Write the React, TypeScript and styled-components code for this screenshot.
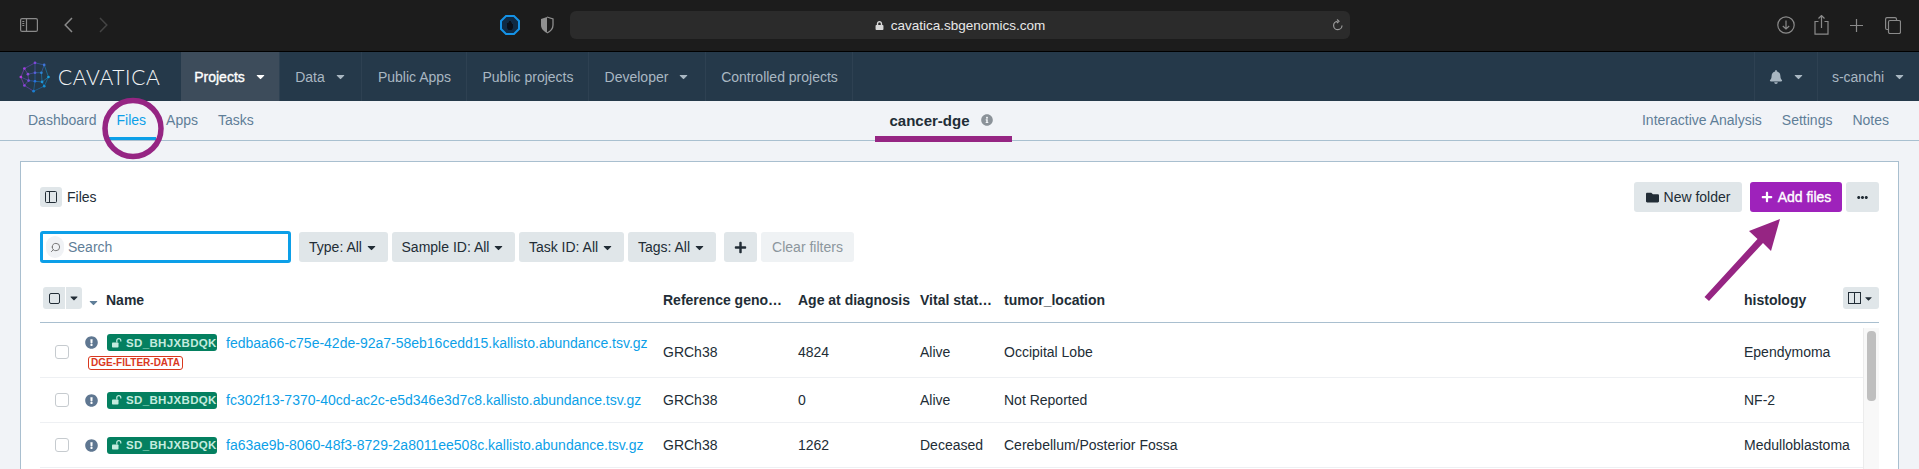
import React from 'react';
import styled, { createGlobalStyle } from 'styled-components';
import {
  FaBell,
  FaCaretDown,
  FaEllipsisH,
  FaExclamationCircle,
  FaFolder,
  FaInfoCircle,
  FaLock,
  FaPlus,
} from 'react-icons/fa';
import { Search as SearchGlyph } from 'lucide-react';

const GlobalStyle = createGlobalStyle`
  html, body {
    margin: 0;
    padding: 0;
    height: 469px;
    overflow: hidden;
    background: #f1f3f7;
    font-family: "Liberation Sans", Arial, sans-serif;
    font-size: 14px;
    color: #222d36;
  }
  * { box-sizing: border-box; }
`;

const Page = styled.div`
  position: relative;
  width: 1919px;
  height: 469px;
  overflow: hidden;
`;

/* browser chrome */
const BrowserBar = styled.header`
  height: 52px;
  background: #1c1c1c;
  border-bottom: 1px solid #000;
  display: flex;
  align-items: center;
  padding: 0 18px 1px 20px;
`;

const ChromeGroup = styled.div`
  display: flex;
  align-items: center;
`;

const ChromeIcon = styled.svg<{ $gap?: number }>`
  display: block;
  margin-left: ${(p) => p.$gap ?? 0}px;
  fill: none;
  stroke: #8a8a8a;
  stroke-width: 1.2;
`;

const AddressBar = styled.div`
  position: relative;
  width: 780px;
  height: 28px;
  margin-left: 16px;
  background: #2b2b2b;
  border-radius: 6px;
  display: flex;
  align-items: center;
  justify-content: center;
  color: #e8e8e8;
  font-size: 13.5px;
  gap: 7px;
  svg { color: #d8d8d8; }
`;

const Reload = styled.svg`
  position: absolute;
  right: 6px;
  top: 8px;
  fill: none;
  stroke: #9a9a9a;
  stroke-width: 1.2;
`;

/* app navigation */
const TopNav = styled.nav`
  height: 49px;
  background: #25394a;
  display: flex;
  align-items: stretch;
`;

const Brand = styled.div`
  width: 181px;
  padding-left: 18px;
  display: flex;
  align-items: center;
  gap: 6px;
`;

const BrandName = styled.span`
  color: #f3f5f7;
  font-family: Lato, "Liberation Sans", sans-serif;
  font-weight: 300;
  font-size: 21px;
  letter-spacing: 0.6px;
  line-height: 1;
`;

const NavItem = styled.a<{ $width: number; $active?: boolean }>`
  width: ${(p) => p.$width}px;
  display: flex;
  align-items: center;
  justify-content: center;
  gap: 9px;
  padding-left: 1px;
  border-right: 1px solid #2e4152;
  background: ${(p) => (p.$active ? '#3d4c5b' : 'transparent')};
  color: ${(p) => (p.$active ? '#fff' : '#a9b7c2')};
  -webkit-text-stroke: ${(p) => (p.$active ? '0.35px #fff' : '0')};
  font-size: 14px;
`;

const NavSpacer = styled.div`
  flex: 1;
  border-right: 1px solid #2e4152;
`;

/* project sub navigation */
const SubNav = styled.div`
  height: 40px;
  border-bottom: 1px solid #a9c0d0;
  display: grid;
  grid-template-columns: 1fr auto 1fr;
  padding: 0 20px 0 18px;
`;

const SubLinks = styled.div<{ $right?: boolean }>`
  display: flex;
  justify-content: ${(p) => (p.$right ? 'flex-end' : 'flex-start')};
`;

const SubLink = styled.a<{ $active?: boolean }>`
  position: relative;
  height: 39px;
  padding: 0 10px;
  line-height: 39px;
  color: ${(p) => (p.$active ? '#0c9fe8' : '#5f7e98')};
  ${(p) =>
    p.$active &&
    `&::after {
      content: '';
      position: absolute;
      left: 0;
      right: 0;
      bottom: 0;
      height: 3px;
      background: #0c9fe8;
    }`}
`;

const ProjectTitle = styled.div`
  display: flex;
  align-items: center;
  height: 38px;
  gap: 11px;
  margin-left: -35px;
  font-size: 15px;
  font-weight: 700;
  color: #222d36;
  svg { color: #8b9299; }
`;

/* files card */
const Card = styled.section`
  margin: 20px 20px 0;
  height: 320px;
  background: #fff;
  border: 1px solid #a9bfcf;
  border-bottom: 0;
  padding: 20px 19px 0;
`;

const CardHeader = styled.div`
  display: flex;
  align-items: center;
  justify-content: space-between;
  height: 30px;
`;

const PanelTitle = styled.div`
  display: flex;
  align-items: center;
  gap: 5px;
`;

const GreyButton = styled.button<{ $w?: number }>`
  height: 30px;
  width: ${(p) => (p.$w ? `${p.$w}px` : 'auto')};
  border: 0;
  border-radius: 3px;
  background: #e0e6e9;
  color: #222d36;
  font: 14px "Liberation Sans", Arial, sans-serif;
  display: inline-flex;
  align-items: center;
  justify-content: center;
  gap: 3px;
  padding: 0;
`;

const ToggleButton = styled(GreyButton)`
  width: 22px;
  height: 20px;
`;

const PrimaryButton = styled(GreyButton)`
  background: #9e22bb;
  color: #fff;
  -webkit-text-stroke: 0.35px #fff;
  gap: 5px;
`;

const ClearButton = styled(GreyButton)`
  background: #eff2f4;
  color: #8c969d;
`;

const HeaderActions = styled.div`
  display: flex;
  gap: 4px;
`;

const FilterBar = styled.div`
  display: flex;
  align-items: center;
  gap: 4px;
  margin-top: 19px;
  height: 32px;
`;

const SearchBox = styled.div`
  width: 251px;
  height: 32px;
  margin-right: 4px;
  border: 3px solid #0c9fe8;
  border-radius: 3px;
  display: flex;
  align-items: center;
  padding-left: 3px;
  gap: 4px;
  color: #5f7e98;
`;

const SearchIcon = styled.span`
  width: 18px;
  height: 22px;
  border-radius: 9px;
  background: #f0f2f5;
  display: flex;
  align-items: center;
  justify-content: center;
  color: #6e6e6e;
  svg { transform: scaleX(-1); }
`;

const PlusButton = styled(GreyButton)`
  margin-left: 4px;
`;

const columns = '623px 135px 122px 84px 740px 1fr';

const TableHead = styled.div`
  display: grid;
  grid-template-columns: ${columns};
  align-items: center;
  height: 60px;
  padding-top: 15px;
  border-bottom: 1px solid #a9bfcf;
  font-weight: 700;
  white-space: nowrap;
`;

const NameHead = styled.div`
  display: flex;
  align-items: center;
  padding-left: 3px;
`;

const SelectGroup = styled.div`
  display: flex;
  gap: 1px;
  margin: 0 5px 4px 0;
`;

const SelectPart = styled.div<{ $w: number; $left?: boolean }>`
  width: ${(p) => p.$w}px;
  height: 22px;
  background: #e0e6e9;
  border-radius: ${(p) => (p.$left ? '3px 0 0 3px' : '0 3px 3px 0')};
  display: flex;
  align-items: center;
  justify-content: center;
`;

const HeadCheck = styled.span`
  width: 11px;
  height: 11px;
  border: 1px solid #222d36;
  border-radius: 2px;
`;

const SortCaret = styled(FaCaretDown)`
  color: #5f7e98;
  margin: 4px 6px 0 0;
`;

const LastHead = styled.div`
  display: flex;
  align-items: center;
  justify-content: space-between;
`;

const ColumnsButton = styled(SelectPart)`
  width: 36px;
  margin-bottom: 4px;
  border-radius: 3px;
  gap: 1px;
`;

const TableBody = styled.div`
  display: flex;
  align-items: flex-start;
`;

const Rows = styled.div`
  flex: 1;
`;

const Row = styled.div<{ $h: number; $tagged?: boolean }>`
  display: grid;
  grid-template-columns: ${columns};
  align-items: center;
  height: ${(p) => p.$h}px;
  padding-top: ${(p) => (p.$tagged ? 4 : 0)}px;
  border-bottom: 1px solid #eef0f3;
  white-space: nowrap;
`;

const NameCell = styled.div`
  display: flex;
  align-items: center;
  padding-left: 15px;
`;

const RowCheck = styled.span`
  width: 14px;
  height: 14px;
  border: 1px solid #c6cbcf;
  border-radius: 3px;
  background: #fff;
`;

const FileInfo = styled.div`
  margin-left: 16px;
  display: flex;
  flex-direction: column;
  gap: 5px;
`;

const FileLine = styled.div`
  display: flex;
  align-items: center;
  svg.alert { color: #5f7791; }
`;

const Badge = styled.span`
  width: 110px;
  height: 17px;
  margin: 0 9px 0 9px;
  border-radius: 3px;
  background: #048060;
  color: #c4ecdf;
  font-size: 11.5px;
  font-weight: 700;
  letter-spacing: 0.35px;
  display: flex;
  align-items: center;
  padding-left: 5px;
  gap: 4px;
`;

const FileLink = styled.a`
  color: #0c9fe8;
`;

const Tag = styled.span`
  align-self: flex-start;
  margin-left: 3px;
  width: 95px;
  height: 14px;
  border: 1px solid #d9381e;
  border-radius: 3px;
  color: #d9381e;
  font-size: 10px;
  font-weight: 700;
  line-height: 12px;
  text-align: center;
`;

const Scrollbar = styled.div`
  width: 16px;
  height: 141px;
  margin-top: 5px;
  background: #f8f8f8;
  border-left: 1px solid #ececec;
  padding: 3px 3px 0 3px;
`;

const ScrollThumb = styled.div`
  height: 70px;
  border-radius: 4px;
  background: #bfbfbf;
`;

/* hand-drawn annotations lying over the screenshot */
const Annotation = styled.svg`
  position: absolute;
  left: 0;
  top: 0;
  pointer-events: none;
`;

const Caret = () => <FaCaretDown size={13} />;

const OpenLock = () => (
  <svg width="10" height="10" viewBox="0 0 10 10">
    <rect x="0" y="4.500" width="6.500" height="5" rx="0.800" fill="#c4ecdf" />
    <path d="M4.800 4.500V2.600a2 2 0 0 1 4 0v.900" fill="none" stroke="#c4ecdf" strokeWidth="1.200" />
  </svg>
);

const Logo = () => {
  const nodes: [number, number, string][] = [
    [9, 12, '#a03fe0'], [24, 4, '#8048d8'], [37, 7, '#3f74d8'], [43, 24, '#1a9fdc'],
    [37, 37, '#1490d4'], [22, 44, '#1a80d0'], [9, 36, '#8a44dc'], [4, 24, '#b83fe0'],
    [14, 20, '#8d4ad8'], [24, 18, '#5a5fd8'], [33, 18, '#2f86d8'], [24, 30, '#2a70dc'],
    [34, 31, '#1f95d8'], [15, 29, '#7050d8'],
  ];
  const links = [
    [0, 1], [1, 2], [2, 3], [3, 4], [4, 5], [5, 6], [6, 7], [7, 0], [0, 8], [8, 9], [9, 10], [10, 2],
    [1, 9], [9, 11], [11, 12], [12, 3], [11, 5], [13, 11], [13, 8], [13, 6], [10, 12], [7, 13], [12, 4],
  ];
  return (
    <svg width="34" height="34" viewBox="0 0 48 48">
      {links.map(([a, b], i) => (
        <line key={i} x1={nodes[a][0]} y1={nodes[a][1]} x2={nodes[b][0]} y2={nodes[b][1]} stroke={nodes[b][2]} strokeWidth="0.9" opacity="0.75" />
      ))}
      {nodes.map(([x, y, c], i) => (
        <circle key={i} cx={x} cy={y} r="1.9" fill={c} />
      ))}
    </svg>
  );
};

const files = [
  { id: 'fedbaa66-c75e-42de-92a7-58eb16cedd15.kallisto.abundance.tsv.gz', age: '4824', vital: 'Alive', location: 'Occipital Lobe', histology: 'Ependymoma', tag: 'DGE-FILTER-DATA', h: 55 },
  { id: 'fc302f13-7370-40cd-ac2c-e5d346e3d7c8.kallisto.abundance.tsv.gz', age: '0', vital: 'Alive', location: 'Not Reported', histology: 'NF-2', h: 45 },
  { id: 'fa63ae9b-8060-48f3-8729-2a8011ee508c.kallisto.abundance.tsv.gz', age: '1262', vital: 'Deceased', location: 'Cerebellum/Posterior Fossa', histology: 'Medulloblastoma', h: 45 },
];

const App = () => {
  return (
    <Page>
      <GlobalStyle />
      <BrowserBar>
        <ChromeGroup>
          <ChromeIcon width="18" height="14" viewBox="0 0 18 14">
            <rect x="0.6" y="0.6" width="16.8" height="12.8" rx="1.5" />
            <path d="M6.5 0.6v12.8M2.3 3.5h2M2.3 5.5h2M2.3 7.5h2" />
          </ChromeIcon>
          <ChromeIcon $gap={26} width="9" height="16" viewBox="0 0 9 16" style={{ strokeWidth: 1.5 }}>
            <path d="M8 1 1.2 8 8 15" />
          </ChromeIcon>
          <ChromeIcon $gap={26} width="9" height="16" viewBox="0 0 9 16" style={{ stroke: '#444', strokeWidth: 1.5 }}>
            <path d="M1 1l6.800 7L1 15" />
          </ChromeIcon>
          <svg width="20" height="20" viewBox="0 0 20 20" style={{ marginLeft: 392 }}>
            <path d="M6 1h8l5 5v8l-5 5H6l-5-5V6z" fill="#0f2a44" stroke="#1592e6" strokeWidth="2" />
            <path d="M7 13V8h1v-.5h1V6h2v1.500h1V9h1v4l-1.500 2h-3z" fill="#0a0f18" />
          </svg>
          <svg width="14" height="18" viewBox="0 0 14 18" style={{ marginLeft: 20 }}>
            <path d="M7 1 1 3v6c0 4 3 6.500 6 8z" fill="#8f8f8f" />
            <path d="M7 1l6 2v6c0 4-3 6.500-6 8" fill="none" stroke="#8f8f8f" strokeWidth="1.300" />
          </svg>
        </ChromeGroup>
        <AddressBar>
          <FaLock size={9} />
          cavatica.sbgenomics.com
          <Reload width="12" height="13" viewBox="0 0 12 13">
            <path d="M10 6.500a4.200 4.200 0 1 1-4.500-4.200M5 0.500l2 1.800-2 1.800" />
          </Reload>
        </AddressBar>
        <ChromeGroup style={{ marginLeft: 'auto' }}>
          <ChromeIcon width="18" height="18" viewBox="0 0 18 18">
            <circle cx="9" cy="9" r="8.200" />
            <path d="M9 4.500v8.500M5.800 10 9 13l3.200-3" />
          </ChromeIcon>
          <ChromeIcon $gap={19} width="15" height="20" viewBox="0 0 15 20">
            <path d="M4.500 6.500H1v12.700h13V6.500h-3.500M7.500 13V1M4.500 3.500l3-3 3 3" />
          </ChromeIcon>
          <ChromeIcon $gap={21} width="13" height="13" viewBox="0 0 13 13">
            <path d="M6.500 0v13M0 6.500h13" />
          </ChromeIcon>
          <ChromeIcon $gap={22} width="16" height="17" viewBox="0 0 16 17">
            <rect x="3.500" y="3.500" width="12" height="13" rx="1.500" />
            <path d="M3.500 12.500H2A1.500 1.500 0 0 1 .6 11V2A1.500 1.500 0 0 1 2 .6h8A1.500 1.500 0 0 1 11.500 2v1.500" />
          </ChromeIcon>
        </ChromeGroup>
      </BrowserBar>

      <TopNav>
        <Brand>
          <Logo />
          <BrandName>CAVATICA</BrandName>
        </Brand>
        <NavItem $width={99} $active>Projects <Caret /></NavItem>
        <NavItem $width={82}>Data <Caret /></NavItem>
        <NavItem $width={105}>Public Apps</NavItem>
        <NavItem $width={122}>Public projects</NavItem>
        <NavItem $width={117}>Developer <Caret /></NavItem>
        <NavItem $width={147}>Controlled projects</NavItem>
        <NavSpacer />
        <NavItem $width={63}><FaBell size={14} /> <Caret /></NavItem>
        <NavItem $width={101} style={{ borderRight: 0 }}>s-canchi <Caret /></NavItem>
      </TopNav>

      <SubNav>
        <SubLinks>
          <SubLink>Dashboard</SubLink>
          <SubLink $active>Files</SubLink>
          <SubLink>Apps</SubLink>
          <SubLink>Tasks</SubLink>
        </SubLinks>
        <ProjectTitle>
          cancer-dge
          <FaInfoCircle size={12} />
        </ProjectTitle>
        <SubLinks $right>
          <SubLink>Interactive Analysis</SubLink>
          <SubLink>Settings</SubLink>
          <SubLink>Notes</SubLink>
        </SubLinks>
      </SubNav>

      <Card>
        <CardHeader>
          <PanelTitle>
            <ToggleButton>
              <svg width="12" height="12" viewBox="0 0 12 12" fill="none" stroke="#222d36">
                <rect x="0.5" y="0.5" width="11" height="11" rx="1" />
                <path d="M4.500 0.500v11" />
              </svg>
            </ToggleButton>
            Files
          </PanelTitle>
          <HeaderActions>
            <GreyButton $w={108} style={{ marginRight: 4, gap: 5 }}><FaFolder size={13} /> New folder</GreyButton>
            <PrimaryButton $w={92}><FaPlus size={12} /> Add files</PrimaryButton>
            <GreyButton $w={33}><FaEllipsisH size={11} /></GreyButton>
          </HeaderActions>
        </CardHeader>

        <FilterBar>
          <SearchBox>
            <SearchIcon><SearchGlyph size={11} strokeWidth={2} /></SearchIcon>
            Search
          </SearchBox>
          <GreyButton $w={89}>Type: All <Caret /></GreyButton>
          <GreyButton $w={123}>Sample ID: All <Caret /></GreyButton>
          <GreyButton $w={105}>Task ID: All <Caret /></GreyButton>
          <GreyButton $w={88}>Tags: All <Caret /></GreyButton>
          <PlusButton $w={33}><FaPlus size={13} /></PlusButton>
          <ClearButton $w={93}>Clear filters</ClearButton>
        </FilterBar>

        <TableHead>
          <NameHead>
            <SelectGroup>
              <SelectPart $w={22} $left><HeadCheck /></SelectPart>
              <SelectPart $w={16}><FaCaretDown size={12} /></SelectPart>
            </SelectGroup>
            <SortCaret size={13} />
            Name
          </NameHead>
          <div>Reference geno…</div>
          <div>Age at diagnosis</div>
          <div>Vital stat…</div>
          <div>tumor_location</div>
          <LastHead>
            histology
            <ColumnsButton $w={36}>
              <svg width="14" height="12" viewBox="0 0 14 12" fill="none" stroke="#222d36">
                <rect x="0.5" y="0.5" width="12" height="11" />
                <path d="M6.500 0.500v11" />
              </svg>
              <FaCaretDown size={11} />
            </ColumnsButton>
          </LastHead>
        </TableHead>

        <TableBody>
          <Rows>
            {files.map((file) => (
              <Row key={file.id} $h={file.h} $tagged={!!file.tag}>
                <NameCell>
                  <RowCheck />
                  <FileInfo>
                    <FileLine>
                      <FaExclamationCircle className="alert" size={13} />
                      <Badge><OpenLock /> SD_BHJXBDQK</Badge>
                      <FileLink>{file.id}</FileLink>
                    </FileLine>
                    {file.tag && <Tag>{file.tag}</Tag>}
                  </FileInfo>
                </NameCell>
                <div>GRCh38</div>
                <div>{file.age}</div>
                <div>{file.vital}</div>
                <div>{file.location}</div>
                <div>{file.histology}</div>
              </Row>
            ))}
          </Rows>
          <Scrollbar>
            <ScrollThumb />
          </Scrollbar>
        </TableBody>
      </Card>

      <Annotation width="1919" height="469" viewBox="0 0 1919 469">
        <ellipse cx="133" cy="128.500" rx="28" ry="28" fill="none" stroke="#962583" strokeWidth="5.500" />
        <rect x="875" y="136" width="137" height="6" fill="#962583" />
        <path d="M1704.500 297 1757.500 239 1749 231 1780 219 1771 251 1763 243 1709 301z" fill="#962583" />
      </Annotation>
    </Page>
  );
};

export default App;
